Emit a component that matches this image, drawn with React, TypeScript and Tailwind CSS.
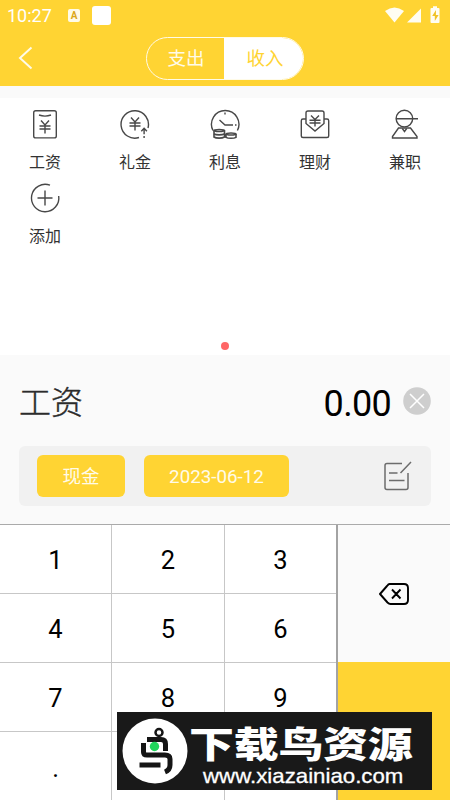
import React from 'react';

const ink = '#484848';

function Yen({ x, y }: { x: number; y: number }) {
  return <path transform={`translate(${x} ${y})`} d="M-4-5.5 0-1l4-4.5M0-1v8.5M-5.5 0h11M-5.5 3h11" />;
}

function Icon({ children }: { children: React.ReactNode }) {
  return (
    <svg width="32" height="32" viewBox="0 0 32 32" fill="none" stroke={ink} strokeWidth="1.4">
      {children}
    </svg>
  );
}

const categories = [
  {
    label: '工资',
    icon: (
      <Icon>
        <rect x="4.7" y="2.7" width="22.6" height="27.2" rx="2" />
        <path d="M10 7q6 2.200 12 0" />
        <Yen x={16} y={18} />
      </Icon>
    ),
  },
  {
    label: '礼金',
    icon: (
      <Icon>
        <path d="M20 29.500A13.700 13.700 0 1 1 29 20" />
        <Yen x={16} y={15} />
        <path d="m22.300 23.200 2.800-3 2.800 3M25.100 20.500v5.800M25.100 28v2" />
      </Icon>
    ),
  },
  {
    label: '利息',
    icon: (
      <Icon>
        <path d="M4 22.500A13.700 13.700 0 1 1 28.400 22.500M16 4.500v2M10.500 12l5.500 5h8M26 17h1.500" />
        <g strokeWidth="1.600">
          <path d="M5 22.500V29c2 1.500 8 1.500 10.500 0v-6.500M17 26v3.300c2 1.300 8 1.300 10 0V26" fill="#fff" />
          <ellipse cx="10.200" cy="22.500" rx="5.300" ry="1" />
          <ellipse cx="22" cy="26" rx="5" ry="1" />
          <path d="M5 26c2 1.200 8 1.200 10.500 0" />
        </g>
      </Icon>
    ),
  },
  {
    label: '理财',
    icon: (
      <Icon>
        <path d="M7 11H4q-1.700 0-1.700 1.700V28q0 1.500 1.700 1.500h24q1.700 0 1.700-1.500V12.700Q29.700 11 28 11h-3" />
        <path d="M7 15.500V5q0-2 2-2h14q2 0 2 2v10.500L16 23z" />
        <path d="m12 7.500 4 4 4-4M16 11.500v7M10.500 12.300h11M10.500 15h11" />
      </Icon>
    ),
  },
  {
    label: '兼职',
    icon: (
      <Icon>
        <circle cx="15.400" cy="10.600" r="8.300" />
        <path d="M7 10.800h22M9.500 20h12L28 28.500V30H3.500v-1.500z" />
        <path d="m13.300 20.500 2.200 3 2.200-3" />
      </Icon>
    ),
  },
  {
    label: '添加',
    icon: (
      <Icon>
        <path d="M21 3.200A13.700 13.700 0 1 0 29.700 14M16 8.500v15M8.500 16h15" />
      </Icon>
    ),
  },
];

function StatusBar() {
  return (
    <div className="flex h-[30px] items-center pl-[7px] pr-[8px] text-white">
      <span className="w-[61px] pt-[2px] text-[18px] leading-[30px]">10:27</span>
      <span className="mt-px flex h-[13px] w-[12px] items-center justify-center rounded-[2px] bg-[#fffbe8] text-[10px] font-bold leading-none text-[#dca719]">A</span>
      <span className="ml-[12px] h-[19px] w-[19px] rounded-[3px] bg-white" />
      <svg className="ml-auto" width="58" height="20" viewBox="0 0 58 20" fill="#fffdf2">
        <path d="M1 6Q10.500-1 20 6L10.500 17.500z" />
        <path d="M37 3.500V17.500H23z" />
        <path d="M49 3V1.300h4V3h1.500q1 0 1 1v13q0 1-1 1h-7q-1 0-1-1V4q0-1 1-1z" />
        <path d="m52 5-3.800 6h2.600v5l3.800-6h-2.700z" fill="#f0c226" />
      </svg>
    </div>
  );
}

function Watermark() {
  return (
    <div className="absolute bottom-[10px] left-[117px] flex h-[78px] w-[315px] items-center bg-[#191919] text-white">
      <svg className="ml-[5px] shrink-0" width="66" height="66" viewBox="0 0 66 66">
        <circle cx="33" cy="33" r="32.500" fill="#fff" />
        <circle cx="37" cy="14.500" r="3.500" fill="none" stroke="#151515" strokeWidth="2.500" />
        <path d="M25 21.500h14q4.500 0 4.500 4.500v7M21.500 25v9q0 3 3.500 3h18q5 0 5 4v6q0 5-5 7M17.500 47h21" fill="none" stroke="#151515" strokeWidth="5" />
        <circle cx="32.500" cy="28.500" r="4.700" fill="#20d65b" />
      </svg>
      <div className="relative h-full flex-1">
        <div className="absolute left-[1px] top-[12px] origin-top-left scale-y-[.8] whitespace-nowrap font-['Noto_Sans_CJK_SC',sans-serif] text-[45px] font-black leading-[46px] tracking-[-0.300px]">下载鸟资源</div>
        <div className="absolute left-[15px] top-[53px] origin-left scale-x-[1.060] whitespace-nowrap font-['Liberation_Sans',sans-serif] text-[21px] leading-[21px] [-webkit-text-stroke:0.3px_white]">www.xiazainiao.com</div>
      </div>
    </div>
  );
}

const keyRows = [['1', '2', '3'], ['4', '5', '6'], ['7', '8', '9'], ['.', '0', '']];

export default function App() {
  return (
    <main className="relative flex h-[800px] w-[450px] flex-col overflow-hidden bg-white font-[Roboto,'Noto_Sans_CJK_SC',sans-serif]">
      <header className="h-[86px] shrink-0 bg-[#ffd433]">
        <StatusBar />
        <div className="flex h-[56px] items-center pl-[18px]">
          <svg width="15" height="24" viewBox="0 0 15 24" fill="none" stroke="#fffbe8" strokeWidth="2">
            <path d="M13.500 1.500 2 12l11.500 10.500" />
          </svg>
          <div className="ml-[113px] flex h-[43px] w-[158px] overflow-hidden rounded-full border-[1.500px] border-[#fffbe8] text-[18.500px]">
            <button className="flex w-[77px] items-center justify-center pl-px pt-[3px] text-[#fffbe8]">支出</button>
            <button className="flex flex-1 items-center justify-center bg-white pl-[3px] pt-[3px] text-[#ffd433]">收入</button>
          </div>
        </div>
      </header>
      <section className="flex h-[269px] shrink-0 flex-col border-t-[12px] border-[#fafafa]">
        <div className="grid grid-cols-5 pt-[10px]">
          {categories.map((c) => (
            <div key={c.label} className="flex h-[74px] flex-col items-center">
              {c.icon}
              <span className="mt-[11px] text-[16px] leading-[24px] text-[#333]">{c.label}</span>
            </div>
          ))}
        </div>
        <span className="mx-auto mb-[5px] mt-auto h-[8px] w-[8px] rounded-full bg-[#ff6666]" />
      </section>
      <section className="h-[169px] shrink-0 bg-[#fafafa] px-[19px]">
        <div className="flex h-[91px] items-center pt-[1px]">
          <span className="pt-[3px] text-[32px] font-light text-[#2b2b2b] [-webkit-text-stroke:0.4px_#2b2b2b]">工资</span>
          <span className="ml-auto pt-[5px] text-[36px] tracking-[-0.700px] text-black">0.00</span>
          <svg className="ml-[12px]" width="28" height="28" viewBox="0 0 28 28">
            <circle cx="14" cy="14" r="13.800" fill="#cecece" />
            <path d="m7 7 14 14M21 7 7 21" stroke="#fff" strokeWidth="1.500" />
          </svg>
        </div>
        <div className="flex h-[60px] items-center rounded-[6px] bg-[#f1f1f1] pl-[18px] pr-[19px] text-[18.500px] text-[#fffbe8]">
          <button className="h-[42px] w-[88px] rounded-[6px] bg-[#ffd433] pt-[3px]">现金</button>
          <button className="ml-[19px] h-[42px] w-[145px] rounded-[6px] bg-[#ffd433] pt-[2px] text-[18.800px]">2023-06-12</button>
          <svg className="ml-auto" width="30" height="32" viewBox="0 0 30 32" fill="none" stroke="#6c6c6c" strokeWidth="1.500">
            <path d="M20 3.500H5q-2 0-2 2v22q0 2 2 2h19q2 0 2-2V13M7 13h8.500M7 20.500h15.500M18.500 13 29 2" />
          </svg>
        </div>
      </section>
      <section className="flex h-[276px] shrink-0 border-t border-[#aaa]">
        <div className="w-[338px] border-r-2 border-[#a3a3a3]">
          {keyRows.map((row, i) => (
            <div key={i} className="grid h-[69px] grid-cols-[112px_113px_111px] border-b border-[#c7c7c7] last:border-b-0">
              {row.map((key, j) => (
                <button key={j} className={`flex items-center justify-center pt-[3px] text-[25.500px] text-black ${j === 2 ? '' : 'border-r border-[#c7c7c7]'}`}>
                  {key}
                </button>
              ))}
            </div>
          ))}
        </div>
        <div className="flex flex-1 flex-col">
          <div className="flex h-[137px] items-center justify-center bg-[#fafafa]">
            <svg width="30" height="22" viewBox="0 0 30 22" fill="none" stroke="#000" strokeWidth="1.900" strokeLinejoin="round">
              <path d="M10.500 1H25q4 0 4 4v12q0 4-4 4H11.500q-1.500 0-3-1.500L1 11 8 3q1.500-2 2.500-2zM13 6.500l8.500 9M21.500 6.500l-8.500 9" />
            </svg>
          </div>
          <div className="flex-1 bg-[#ffd433]" />
        </div>
      </section>
      <Watermark />
    </main>
  );
}
